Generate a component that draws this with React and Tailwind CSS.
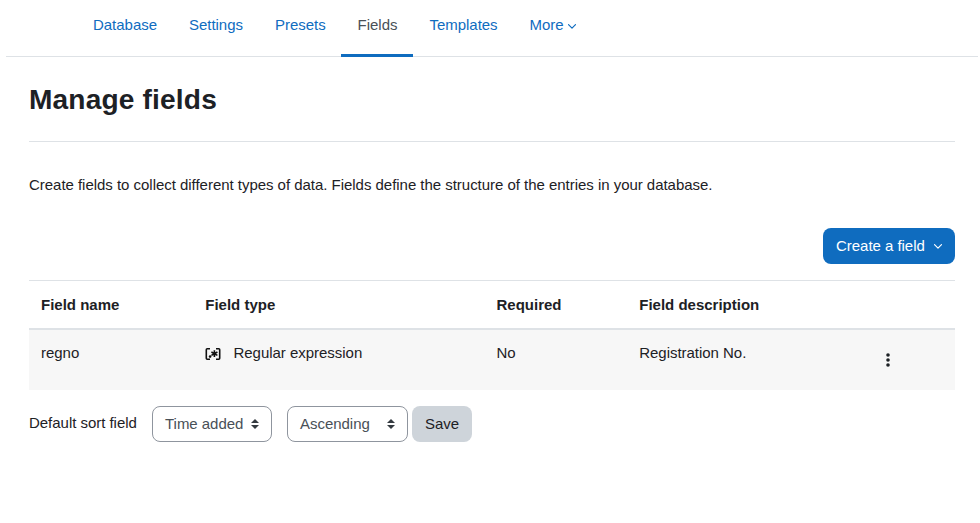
const Chevron = ({ className }) => (
  <svg viewBox="0 0 8 5" className={className} fill="none" stroke="currentColor" strokeWidth="1.2" strokeLinecap="round" strokeLinejoin="round">
    <path d="M0.5 0.7 4 4.2 7.5 0.7" />
  </svg>
);

const tabs = ["Database", "Settings", "Presets", "Fields", "Templates"];

function Select({ label, className }) {
  return (
    <button className={`flex h-9 items-center justify-between rounded-lg border border-[#8f959e] bg-white pr-3 pl-3 text-[#495057] ${className}`}>
      <span>{label}</span>
      <svg viewBox="0 0 4 5" className="h-[10px] w-2" fill="#343a40">
        <path d="M2 0L0 2h4zm0 5L0 3h4z" />
      </svg>
    </button>
  );
}

export default function App() {
  return (
    <div className="h-[523px] w-[980px] overflow-hidden bg-white font-['Liberation_Sans',Arial,sans-serif] text-[15px] leading-[22px] tracking-[-0.03px] text-[#1d2125]">
      <nav className="mr-[2px] ml-[6px] flex h-[57px] border-b border-[#dee2e6] pl-[71px] text-[#0f6cbf]">
        {tabs.map((tab) => (
          <a
            key={tab}
            className={`h-[57px] border-b-[3px] pt-[14px] ${tab === "Fields" ? "-ml-[0.5px] border-[#0f6cbf] pr-4 pl-[16.5px] text-[#495057]" : "border-transparent px-4"}`}
          >
            {tab}
          </a>
        ))}
        <a className="flex h-[36px] items-center gap-1 px-4 pt-[14px]">
          More
          <Chevron className="mt-[3px] h-[5px] w-2" />
        </a>
      </nav>

      <main className="mr-[25px] ml-[29px]">
        <header className="h-[85px] border-b border-[#dee2e6] pt-[26px]">
          <h2 className="text-[28.125px] leading-[34px] font-bold tracking-[0.16px]">Manage fields</h2>
        </header>
        <p className="mt-8">
          Create fields to collect different types of data. Fields define the structure of the entries in your database.
        </p>
        <div className="mt-8 flex justify-end">
          <button className="flex h-9 w-[132px] items-center justify-between rounded-lg bg-[#0f6cbf] px-[13px] text-white">
            Create a field
            <Chevron className="h-[5px] w-2" />
          </button>
        </div>

        <table className="mt-4 w-full table-fixed border-separate border-spacing-0 text-left">
          <colgroup>
            <col className="w-[164.25px]" />
            <col className="w-[291.25px]" />
            <col className="w-[142.75px]" />
            <col className="w-[247.75px]" />
            <col />
          </colgroup>
          <thead>
            <tr className="h-[50px]">
              {["Field name", "Field type", "Required", "Field description", ""].map((h) => (
                <th key={h} className="border-t border-b-2 border-t-[#dee2e6] border-b-[#dee2e6] px-3 py-0 align-middle font-bold tracking-normal">
                  {h}
                </th>
              ))}
            </tr>
          </thead>
          <tbody>
            <tr className="h-[60px] bg-[#f7f7f7] align-top">
              <td className="px-3 pt-3">regno</td>
              <td className="px-3 pt-3">
                <div className="flex">
                  <svg viewBox="0 0 16 16" className="mt-1 mr-[12.25px] h-4 w-4" fill="none" stroke="#111" strokeWidth="1.6">
                    <path d="M5 2.8H2.2Q1.3 2.8 1.3 3.7v8.6q0 .9.9.9H5M11 2.8h2.8q.9 0 .9.9v8.6q0 .9-.9.9H11" />
                    <path d="M9.4 4.3v6.8M6.4 6l6 3.4M12.4 6 6.4 9.4" strokeWidth="1.6" />
                    <circle cx="5.1" cy="10.6" r="1.3" fill="#111" stroke="none" />
                  </svg>
                  Regular expression
                </div>
              </td>
              <td className="px-3 pt-3">No</td>
              <td className="px-3 pt-3">Registration No.</td>
              <td className="pt-[23px] pl-[11px]">
                <svg viewBox="0 0 4 14" className="h-[14px] w-1" fill="#1d2125">
                  <circle cx="2" cy="2" r="1.8" />
                  <circle cx="2" cy="7" r="1.8" />
                  <circle cx="2" cy="12" r="1.8" />
                </svg>
              </td>
            </tr>
          </tbody>
        </table>

        <form className="mt-4 flex">
          <label className="w-[123px] pt-[6px]">Default sort field</label>
          <Select label="Time added" className="w-[120px]" />
          <Select label="Ascending" className="ml-[15px] w-[121px]" />
          <button type="button" className="ml-1 h-9 w-[60px] rounded-lg bg-[#ced4da]">Save</button>
        </form>
      </main>
    </div>
  );
}
